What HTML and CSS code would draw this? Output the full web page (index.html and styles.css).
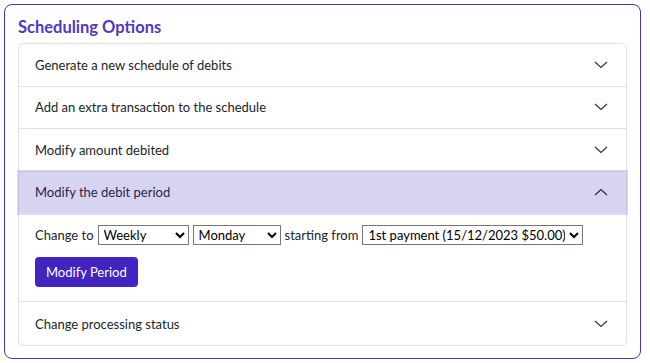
FILE: index.html
```html
<!DOCTYPE html>
<html lang="en">
<head>
    <meta charset="UTF-8">
    <meta name="viewport" content="width=device-width, initial-scale=1.0">
    <title>Scheduling Options</title>
    <link rel="stylesheet" href="styles.css">
</head>
<body>
    <div class="kartica">
        <h2 class="naslov">Scheduling Options</h2>

        <div class="harmonika">
            <div class="stavka">
                <div class="zaglavlje">
                    <span>Generate a new schedule of debits</span>
                    <svg class="strelica" width="14" height="8" viewBox="0 0 14 8"><path d="M1 1 L7 6.5 L13 1" fill="none" stroke="#333" stroke-width="1.2"/></svg>
                </div>
            </div>
            <div class="stavka">
                <div class="zaglavlje">
                    <span>Add an extra transaction to the schedule</span>
                    <svg class="strelica" width="14" height="8" viewBox="0 0 14 8"><path d="M1 1 L7 6.5 L13 1" fill="none" stroke="#333" stroke-width="1.2"/></svg>
                </div>
            </div>
            <div class="stavka">
                <div class="zaglavlje">
                    <span>Modify amount debited</span>
                    <svg class="strelica" width="14" height="8" viewBox="0 0 14 8"><path d="M1 1 L7 6.5 L13 1" fill="none" stroke="#333" stroke-width="1.2"/></svg>
                </div>
            </div>
            <div class="stavka">
                <div class="zaglavlje otvoreno">
                    <span>Modify the debit period</span>
                    <svg class="strelica" width="14" height="8" viewBox="0 0 14 8"><path d="M1 7 L7 1.5 L13 7" fill="none" stroke="#2a2350" stroke-width="1.2"/></svg>
                </div>
                <div class="tijelo">
                    <div class="red">
                        <span>Change to</span>
                        <select class="izbor sirina1">
                            <option>Weekly</option>
                        </select>
                        <select class="izbor sirina2">
                            <option>Monday</option>
                        </select>
                        <span>starting from</span>
                        <select class="izbor sirina3">
                            <option>1st payment (15/12/2023 $50.00)</option>
                        </select>
                    </div>
                    <button class="gumb">Modify Period</button>
                </div>
            </div>
            <div class="stavka">
                <div class="zaglavlje">
                    <span>Change processing status</span>
                    <svg class="strelica" width="14" height="8" viewBox="0 0 14 8"><path d="M1 1 L7 6.5 L13 1" fill="none" stroke="#333" stroke-width="1.2"/></svg>
                </div>
            </div>
        </div>
    </div>
</body>
</html>
```

FILE: styles.css
```css
body {
    margin: 0;
    padding: 4px;
    font-family: Lato, sans-serif;
    font-size: 13px;
    color: #212529;
    background: #fff;
}
.kartica {
    width: 609px;
    border: 1px solid #4a30c2;
    border-radius: 8px;
    padding: 11px 13px 12px 13px;
}
.naslov {
    margin: 0 0 5px 0;
    font-size: 16.5px;
    font-weight: 700;
    color: #5236c4;
    line-height: 22px;
}
.harmonika {
    border: 1px solid #dee2e6;
    border-radius: 5px;
}
.stavka {
    border-bottom: 1px solid #dee2e6;
}
.stavka:last-child {
    border-bottom: none;
}
.zaglavlje {
    display: flex;
    align-items: center;
    justify-content: space-between;
    height: 41.5px;
    padding: 0 18px 0 16px;
}
.stavka:last-child .zaglavlje {
    height: 43px;
}
.otvoreno {
    background-color: #d6d4f1;
    box-shadow: 0 0 0 2px rgba(90, 70, 200, 0.2);
    color: #2a2350;
    position: relative;
}
.strelica {
    display: block;
}
.tijelo {
    padding: 12px 16px 14px 16px;
}
.red {
    display: flex;
    align-items: center;
    gap: 4px;
    height: 20px;
}
.izbor {
    font-family: Lato, sans-serif;
    font-size: 13px;
    height: 20px;
    padding: 0 1px;
    border: 1px solid #767676;
    border-radius: 0;
    background: #fff;
    color: #000;
}
.sirina1 { width: 91px; }
.sirina2 { width: 88px; }
.sirina3 { width: 221px; }
.gumb {
    margin-top: 12px;
    border: none;
    background-color: #4225c0;
    color: white;
    font-family: Lato, sans-serif;
    font-size: 13px;
    padding: 0 11px;
    height: 30px;
    border-radius: 4px;
}
```
